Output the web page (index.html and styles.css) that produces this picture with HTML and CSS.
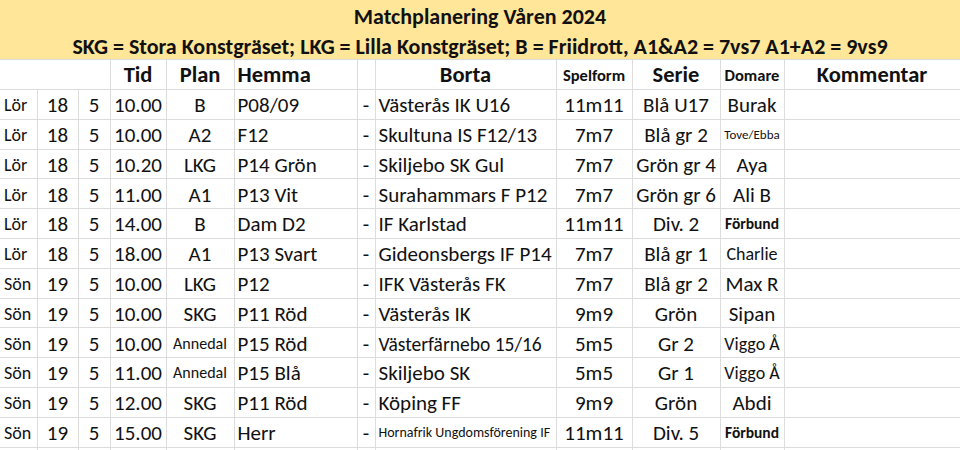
FILE: index.html
```html
<!DOCTYPE html>
<html lang="sv">
<head>
<meta charset="utf-8">
<title>Matchplanering Våren 2024</title>
<link rel="stylesheet" href="styles.css">
</head>
<body>
<div class="banner">
  <div class="banner-line">Matchplanering Våren 2024</div>
  <div class="banner-line">SKG = Stora Konstgräset; LKG = Lilla Konstgräset; B = Friidrott, A1&amp;A2 = 7vs7 A1+A2 = 9vs9</div>
</div>
<table class="grid">
  <colgroup>
    <col class="c-day"><col class="c-date"><col class="c-month"><col class="c-time"><col class="c-plan"><col class="c-home"><col class="c-dash"><col class="c-away"><col class="c-form"><col class="c-serie"><col class="c-ref"><col class="c-comment">
  </colgroup>
  <thead>
    <tr class="head">
      <th colspan="3"></th>
      <th>Tid</th>
      <th>Plan</th>
      <th class="left">Hemma</th>
      <th></th>
      <th>Borta</th>
      <th class="small">Spelform</th>
      <th>Serie</th>
      <th class="small">Domare</th>
      <th>Kommentar</th>
    </tr>
  </thead>
  <tbody>
    <tr><td class="day">Lör</td><td>18</td><td>5</td><td>10.00</td><td>B</td><td class="left">P08/09</td><td class="dash">-</td><td class="left">Västerås IK U16</td><td>11m11</td><td>Blå U17</td><td>Burak</td><td></td></tr>
    <tr><td class="day">Lör</td><td>18</td><td>5</td><td>10.00</td><td>A2</td><td class="left">F12</td><td class="dash">-</td><td class="left">Skultuna IS F12/13</td><td>7m7</td><td>Blå gr 2</td><td class="tiny">Tove/Ebba</td><td></td></tr>
    <tr><td class="day">Lör</td><td>18</td><td>5</td><td>10.20</td><td>LKG</td><td class="left">P14 Grön</td><td class="dash">-</td><td class="left">Skiljebo SK Gul</td><td>7m7</td><td>Grön gr 4</td><td>Aya</td><td></td></tr>
    <tr><td class="day">Lör</td><td>18</td><td>5</td><td>11.00</td><td>A1</td><td class="left">P13 Vit</td><td class="dash">-</td><td class="left">Surahammars F P12</td><td>7m7</td><td>Grön gr 6</td><td>Ali B</td><td></td></tr>
    <tr><td class="day">Lör</td><td>18</td><td>5</td><td>14.00</td><td>B</td><td class="left">Dam D2</td><td class="dash">-</td><td class="left">IF Karlstad</td><td>11m11</td><td>Div. 2</td><td class="fed">Förbund</td><td></td></tr>
    <tr><td class="day">Lör</td><td>18</td><td>5</td><td>18.00</td><td>A1</td><td class="left">P13 Svart</td><td class="dash">-</td><td class="left">Gideonsbergs IF P14</td><td>7m7</td><td>Blå gr 1</td><td class="mid">Charlie</td><td></td></tr>
    <tr><td class="day">Sön</td><td>19</td><td>5</td><td>10.00</td><td>LKG</td><td class="left">P12</td><td class="dash">-</td><td class="left">IFK Västerås FK</td><td>7m7</td><td>Blå gr 2</td><td>Max R</td><td></td></tr>
    <tr><td class="day">Sön</td><td>19</td><td>5</td><td>10.00</td><td>SKG</td><td class="left">P11 Röd</td><td class="dash">-</td><td class="left">Västerås IK</td><td>9m9</td><td>Grön</td><td>Sipan</td><td></td></tr>
    <tr><td class="day">Sön</td><td>19</td><td>5</td><td>10.00</td><td class="venue">Annedal</td><td class="left">P15 Röd</td><td class="dash">-</td><td class="left away-md">Västerfärnebo 15/16</td><td>5m5</td><td>Gr 2</td><td class="mid">Viggo Å</td><td></td></tr>
    <tr><td class="day">Sön</td><td>19</td><td>5</td><td>11.00</td><td class="venue">Annedal</td><td class="left">P15 Blå</td><td class="dash">-</td><td class="left">Skiljebo SK</td><td>5m5</td><td>Gr 1</td><td class="mid">Viggo Å</td><td></td></tr>
    <tr><td class="day">Sön</td><td>19</td><td>5</td><td>12.00</td><td>SKG</td><td class="left">P11 Röd</td><td class="dash">-</td><td class="left">Köping FF</td><td>9m9</td><td>Grön</td><td>Abdi</td><td></td></tr>
    <tr><td class="day">Sön</td><td>19</td><td>5</td><td>15.00</td><td>SKG</td><td class="left">Herr</td><td class="dash">-</td><td class="left away-sm">Hornafrik Ungdomsförening IF</td><td>11m11</td><td>Div. 5</td><td class="fed">Förbund</td><td></td></tr>
    <tr class="tail"><td></td><td></td><td></td><td></td><td></td><td></td><td></td><td></td><td></td><td></td><td></td><td></td></tr>
  </tbody>
</table>
</body>
</html>
```
FILE: styles.css
```css
html, body {
  margin: 0;
  padding: 0;
  background: #ffffff;
}
body {
  font-family: "Carlito", "Lato", "Open Sans", sans-serif;
  color: #111111;
  width: 960px;
  height: 450px;
  overflow: hidden;
}
.banner {
  background: #ffe699;
  height: 59px;
  display: flex;
  flex-direction: column;
  align-items: center;
  border-bottom: 1px solid #dcdcdc;
}
.banner-line {
  height: 29.5px;
  line-height: 33px;
  font-size: 22px;
  font-weight: bold;
  white-space: nowrap;
}
.grid {
  border-collapse: collapse;
  table-layout: fixed;
  width: 960px;
}
.c-day { width: 37px; }
.c-date { width: 41px; }
.c-month { width: 32px; }
.c-time { width: 56px; }
.c-plan { width: 68px; }
.c-home { width: 123px; }
.c-dash { width: 18px; }
.c-away { width: 181px; }
.c-form { width: 76px; }
.c-serie { width: 88px; }
.c-ref { width: 64px; }
.c-comment { width: 176px; }
.grid th, .grid td {
  border: 1px solid #dcdcdc;
  padding: 0 2px;
  text-align: center;
  white-space: nowrap;
  overflow: hidden;
  font-size: 21px;
  line-height: 22px;
}
.grid tr > :first-child { border-left: none; }
.grid th {
  height: 28px;
  padding-top: 1px;
  font-size: 22.5px;
  font-weight: bold;
  border-top: none;
}
.grid td {
  height: 27.3px;
  padding-top: 1.5px;
}
.grid .left { text-align: left; padding-left: 3px; padding-right: 0; }
.grid th.small { font-size: 16.5px; padding-left: 0; padding-right: 0; }
.grid td.day { font-size: 18px; text-align: left; padding-left: 4px; }
.grid td.dash { padding-left: 0; padding-right: 0; }
.grid td.tiny { font-size: 13px; padding-left: 0; padding-right: 0; }
.grid td.mid { font-size: 18px; padding-left: 0; padding-right: 0; }
.grid td.fed { font-size: 15.5px; font-weight: bold; padding-left: 0; padding-right: 0; }
.grid td.venue { font-size: 16px; padding-left: 0; padding-right: 0; }
.grid td.away-md { font-size: 19.5px; }
.grid td.away-sm { font-size: 14px; }
.grid tr.tail td { height: 10px; padding: 0; }
```
